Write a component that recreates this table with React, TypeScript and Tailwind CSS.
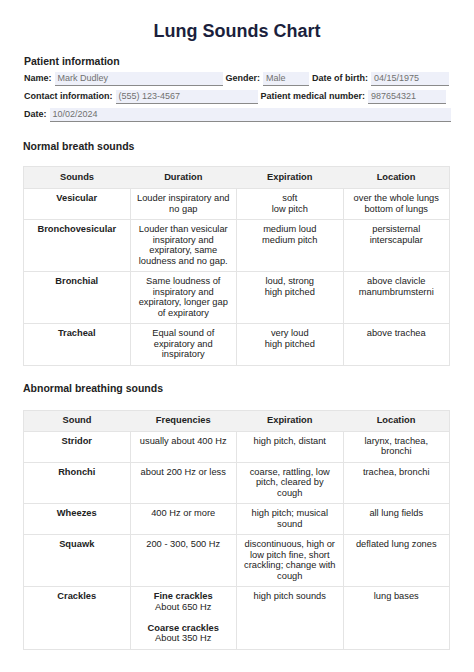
const font = { fontFamily: '"Liberation Sans", Arial, sans-serif' };

type Row = { name: string; cells: React.ReactNode[] };

// lines are split on "|" so the wrapping follows the printed chart
function Lines({ text }: { text: string }) {
  const parts = text.split('|');
  return (
    <>
      {parts.map((p, i) => (
        <span key={i}>
          {p}
          {i < parts.length - 1 && <br />}
        </span>
      ))}
    </>
  );
}

const normalRows: Row[] = [
  { name: 'Vesicular', cells: ['Louder inspiratory and|no gap', 'soft|low pitch', 'over the whole lungs|bottom of lungs'] },
  { name: 'Bronchovesicular', cells: ['Louder than vesicular|inspiratory and|expiratory, same|loudness and no gap.', 'medium loud|medium pitch', 'persisternal|interscapular'] },
  { name: 'Bronchial', cells: ['Same loudness of|inspiratory and|expiratory, longer gap|of expiratory', 'loud, strong|high pitched', 'above clavicle|manumbrumsterni'] },
  { name: 'Tracheal', cells: ['Equal sound of|expiratory and|inspiratory', 'very loud|high pitched', 'above trachea'] },
];

const abnormalRows: Row[] = [
  { name: 'Stridor', cells: ['usually about 400 Hz', 'high pitch, distant', 'larynx, trachea,|bronchi'] },
  { name: 'Rhonchi', cells: ['about 200 Hz or less', 'coarse, rattling, low|pitch, cleared by|cough', 'trachea, bronchi'] },
  { name: 'Wheezes', cells: ['400 Hz or more', 'high pitch; musical|sound', 'all lung fields'] },
  { name: 'Squawk', cells: ['200 - 300, 500 Hz', 'discontinuous, high or|low pitch fine, short|crackling; change with|cough', 'deflated lung zones'] },
  {
    name: 'Crackles',
    cells: [
      <>
        <span className="font-bold">Fine crackles</span><br />About 650 Hz<br /><br />
        <span className="font-bold">Coarse crackles</span><br />About 350 Hz
      </>,
      'high pitch sounds',
      'lung bases',
    ],
  },
];

function Field({ label, value, width }: { label: string; value: string; width: string }) {
  return (
    <div className="flex items-center gap-[3px]">
      <span className="text-[9px] font-bold text-[#222]">{label}</span>
      <div className={`${width} h-[14px] bg-[#eef0f9] border-b border-[#8a8a8a] pl-[3px] pt-[1px] text-[9px] leading-[11px] text-[#707070]`}>{value}</div>
    </div>
  );
}

function Chart({ heads, rows, headH }: { heads: string[]; rows: Row[]; headH: string }) {
  return (
    <table className="w-[427px] table-fixed border-collapse border border-[#e4e4e4] text-[9.3px] leading-[10.5px] text-[#222]">
      <thead>
        <tr className={`${headH} bg-[#f2f2f2]`}>
          {heads.map((h) => (
            <th key={h} className="font-bold align-middle text-center p-0">{h}</th>
          ))}
        </tr>
      </thead>
      <tbody>
        {rows.map((r) => (
          <tr key={r.name}>
            <td className="border border-[#e4e4e4] align-top text-center font-bold pt-[4px] pb-[5px] px-[3px]">{r.name}</td>
            {r.cells.map((c, i) => (
              <td key={i} className="border border-[#e4e4e4] align-top text-center whitespace-nowrap pt-[4px] pb-[5px] px-[3px]">
                {typeof c === 'string' ? <Lines text={c} /> : c}
              </td>
            ))}
          </tr>
        ))}
      </tbody>
    </table>
  );
}

export default function App() {
  return (
    <div className="w-[474px] h-[672px] bg-white overflow-hidden" style={font}>
      <h1 className="pt-[20px] text-center text-[18px] leading-[22px] font-bold text-[#1b1f3d]">Lung Sounds Chart</h1>

      <div className="px-[24px]">
        <h2 className="mt-[13px] text-[10.5px] leading-[13px] font-bold text-[#222]">Patient information</h2>
        <div className="mt-[4px] flex flex-col gap-[4px]">
          <div className="flex gap-[3px]">
            <Field label="Name:" value="Mark Dudley" width="w-[168px]" />
            <Field label="Gender:" value="Male" width="w-[46px]" />
            <Field label="Date of birth:" value="04/15/1975" width="w-[78px]" />
          </div>
          <div className="flex gap-[3px]">
            <Field label="Contact information:" value="(555) 123-4567" width="w-[142px]" />
            <Field label="Patient medical number:" value="987654321" width="w-[78px]" />
          </div>
          <div className="flex">
            <Field label="Date:" value="10/02/2024" width="w-[401px]" />
          </div>
        </div>
      </div>

      <div className="px-[23px]">
        <h2 className="mt-[18px] text-[10.5px] leading-[13px] font-bold text-[#222]">Normal breath sounds</h2>
        <div className="mt-[13px]">
          <Chart heads={['Sounds', 'Duration', 'Expiration', 'Location']} rows={normalRows} headH="h-[22px]" />
        </div>

        <h2 className="mt-[16px] text-[10.5px] leading-[13px] font-bold text-[#222]">Abnormal breathing sounds</h2>
        <div className="mt-[15px]">
          <Chart heads={['Sound', 'Frequencies', 'Expiration', 'Location']} rows={abnormalRows} headH="h-[21px]" />
        </div>
      </div>
    </div>
  );
}
